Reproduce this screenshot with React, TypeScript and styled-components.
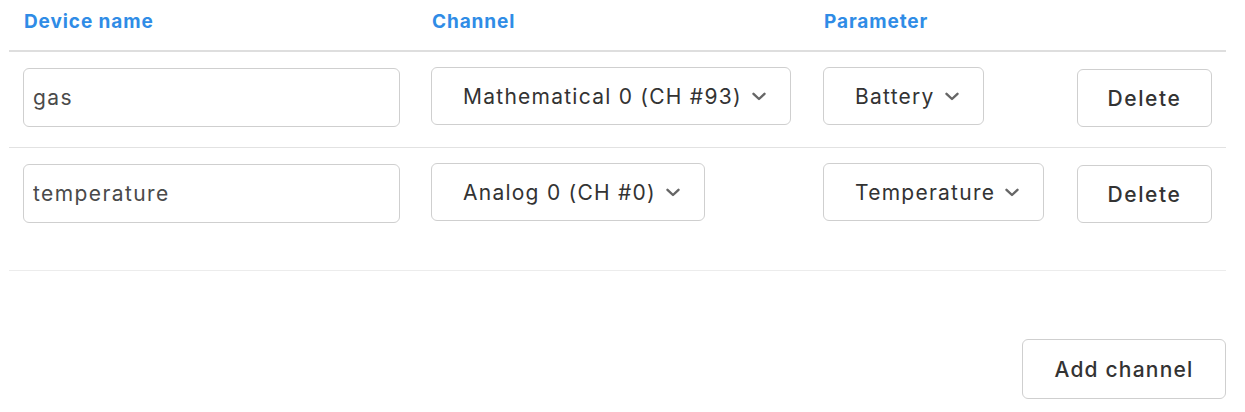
import React from "react";
import styled, { createGlobalStyle } from "styled-components";

const Global = createGlobalStyle`
  html, body { margin: 0; padding: 0; background: #fff; }
  body { font-family: Inter, "Noto Sans", "Liberation Sans", sans-serif; color: #333; }
  * { box-sizing: border-box; }
`;

const Page = styled.div`
  width: 1217px;
  margin-left: 9px;
`;

const Grid = styled.div`
  display: grid;
  grid-template-columns: 408px 392px 254px 1fr;
`;

const HeaderRow = styled(Grid)`
  height: 52px;
  border-bottom: 2px solid #dedede;
  align-items: start;
`;

const HeaderCell = styled.div`
  padding: 9px 0 0 15px;
  font-size: 19px;
  font-weight: 700;
  letter-spacing: 0.9px;
  color: #2f8ce6;
  line-height: 26px;
`;

const Body = styled.div`
  padding-bottom: 27px;
  border-bottom: 1px solid #ececec;
`;

const Row = styled(Grid)<{ $first?: boolean }>`
  height: ${(p) => (p.$first ? "95px" : "96px")};
  border-top: ${(p) => (p.$first ? "none" : "1px solid #e2e2e2")};
  align-items: start;
`;

const Cell = styled.div`
  padding: 16px 0 0 14px;
  display: flex;
`;

const TextInput = styled.input`
  width: 377px;
  height: 59px;
  border: 1px solid #cfcfcf;
  border-radius: 6px;
  padding: 0 9px;
  font-family: inherit;
  font-size: 21px;
  letter-spacing: 1.4px;
  color: #4a4a4a;
  outline: none;
  background: #fff;
`;

const SelectBox = styled.div`
  margin-top: -1px;
  height: 58px;
  display: inline-flex;
  align-items: center;
  gap: 10px;
  padding: 0 24px 0 31px;
  border: 1px solid #cfcfcf;
  border-radius: 6px;
  font-size: 21px;
  letter-spacing: 1.25px;
  color: #333;
  background: #fff;
  white-space: nowrap;
`;

const Button = styled.button<{ $wide?: boolean }>`
  height: ${(p) => (p.$wide ? "60px" : "58px")};
  width: ${(p) => (p.$wide ? "204px" : "135px")};
  margin-top: 1px;
  border: 1px solid #cfcfcf;
  border-radius: 6px;
  background: #fff;
  font-family: inherit;
  font-size: 21px;
  font-weight: 500;
  letter-spacing: ${(p) => (p.$wide ? "1.2px" : "1.6px")};
  color: #333;
  cursor: pointer;
  padding: 0;
`;

const Footer = styled.div`
  display: flex;
  justify-content: flex-end;
  padding-top: 67px;
`;

const Chevron = () => (
  <svg width="14" height="9" viewBox="0 0 14 9" fill="none">
    <path d="M1.5 1.8L7 7L12.5 1.8" stroke="#666" strokeWidth="2.4" strokeLinecap="round" strokeLinejoin="round" />
  </svg>
);

const Select = ({ value }: { value: string }) => (
  <SelectBox>
    <span>{value}</span>
    <Chevron />
  </SelectBox>
);

const rows = [
  { name: "gas", channel: "Mathematical 0 (CH #93)", param: "Battery" },
  { name: "temperature", channel: "Analog 0 (CH #0)", param: "Temperature" },
];

export default function App() {
  return (
    <Page>
      <Global />
      <HeaderRow>
        <HeaderCell>Device name</HeaderCell>
        <HeaderCell>Channel</HeaderCell>
        <HeaderCell>Parameter</HeaderCell>
        <HeaderCell />
      </HeaderRow>
      <Body>
        {rows.map((r, i) => (
          <Row key={i} $first={i === 0}>
            <Cell>
              <TextInput defaultValue={r.name} />
            </Cell>
            <Cell>
              <Select value={r.channel} />
            </Cell>
            <Cell>
              <Select value={r.param} />
            </Cell>
            <Cell>
              <Button>Delete</Button>
            </Cell>
          </Row>
        ))}
      </Body>
      <Footer>
        <Button $wide>Add channel</Button>
      </Footer>
    </Page>
  );
}
